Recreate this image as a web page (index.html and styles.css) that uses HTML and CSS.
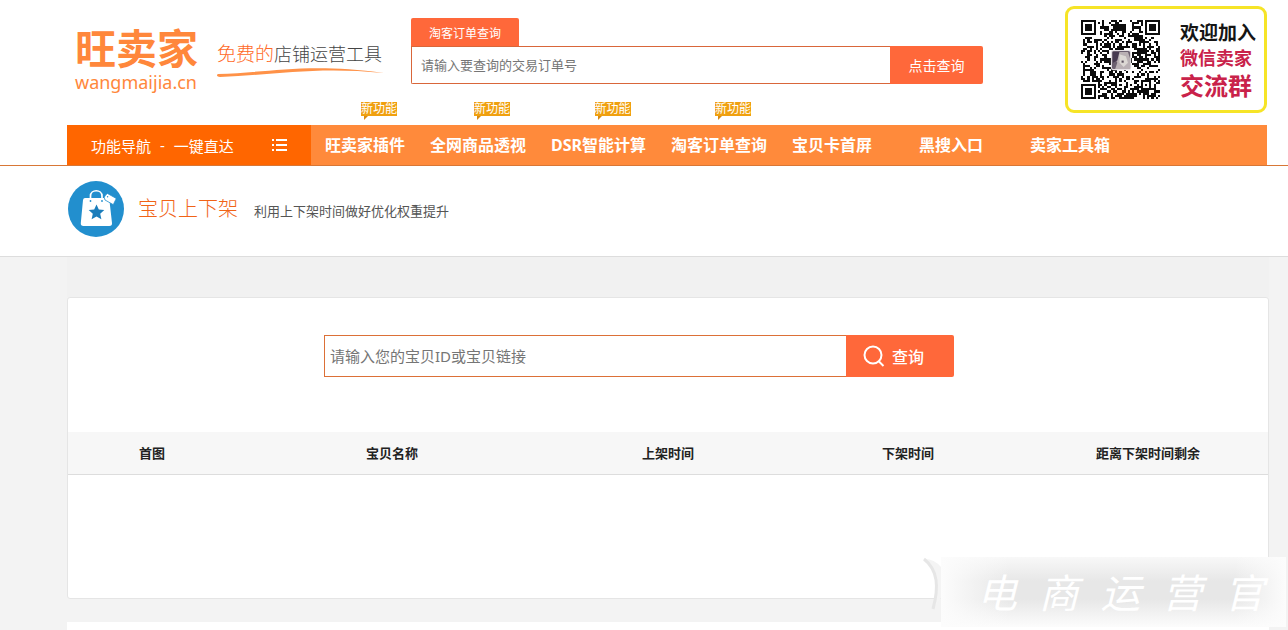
FILE: index.html
```html
<!DOCTYPE html>
<html lang="zh-CN">
<head>
<meta charset="utf-8">
<title>旺卖家 - 宝贝上下架</title>
<link rel="stylesheet" href="styles.css">
</head>
<body>
<header class="header wrap">
  <a class="logo" href="#">
    <span class="logo-name">旺卖家</span>
    <span class="logo-domain">wangmaijia.cn</span>
  </a>
  <div class="slogan">
    <p class="slogan-text"><em>免费的</em>店铺运营工具</p>
    <svg class="slogan-line" viewBox="0 0 168 12" aria-hidden="true"><path d="M1 8C50 7 90-4 167 7C100 0 55 9 3 11C0 11-1 9 1 8Z" fill="#ff9248"/></svg>
  </div>
  <form class="order-search">
    <label class="order-tab" for="order">淘客订单查询</label>
    <div class="order-row">
      <input id="order" class="order-input" type="text" placeholder="请输入要查询的交易订单号">
      <button class="order-button" type="button">点击查询</button>
    </div>
  </form>
  <aside class="group">
    <svg class="qr" id="qr" viewBox="0 0 37 37" role="img" aria-label="微信群二维码" shape-rendering="crispEdges">
      <path id="qr-modules" fill="#0c0c0c"/>
      <g shape-rendering="auto">
        <rect x="14" y="14" width="9.5" height="9.5" rx="1" fill="#e6e2e6"/>
        <rect x="14.5" y="14.5" width="8.5" height="8.5" rx=".8" fill="#6c6070"/>
        <path d="M17 15h5l1 3v5h-7l1-3-1-2z" fill="#b9b0b4"/>
        <path d="M18 16l3 1 1 3-2 2-2-2z" fill="#dcd8d4"/>
        <path d="M15 15h3l-1 4-2 1z" fill="#473a51"/>
        <path d="M19 19h1v1h-1z" fill="#5e5360"/>
      </g>
    </svg>
    <div class="group-text">
      <span class="group-join">欢迎加入</span>
      <span class="group-wechat">微信卖家</span>
      <span class="group-name">交流群</span>
    </div>
  </aside>
</header>

<nav class="nav">
  <div class="wrap">
    <div class="nav-bar">
      <button class="nav-menu" type="button">
        <span class="nav-menu-text"><span>功能导航</span><span>-</span><span>一键直达</span></span>
        <svg width="15" height="12" viewBox="0 0 15 12" aria-hidden="true"><path d="M0 0h2v2H0zM4 0h11v2H4zM0 5h2v2H0zM4 5h11v2H4zM0 10h2v2H0zM4 10h11v2H4z" fill="#fff"/></svg>
      </button>
      <ul class="nav-list">
        <li><a href="#">旺卖家插件<span class="badge">新功能</span></a></li>
        <li><a href="#">全网商品透视<span class="badge">新功能</span></a></li>
        <li><a href="#">DSR智能计算<span class="badge">新功能</span></a></li>
        <li><a href="#">淘客订单查询<span class="badge">新功能</span></a></li>
        <li><a href="#">宝贝卡首屏</a></li>
        <li><a class="nav-wide" href="#">黑搜入口</a></li>
        <li><a href="#">卖家工具箱</a></li>
      </ul>
    </div>
  </div>
</nav>

<section class="title">
  <div class="wrap title-row">
    <svg class="title-icon" viewBox="0 0 56 56" aria-hidden="true">
      <circle cx="28" cy="28" r="28" fill="#228fce"/>
      <path d="M17 17h22q2 0 2.400 2L44 42q.3 3-2.700 3H15.500q-3 0-2.700-3L15 19q.3-2 2-2z" fill="#fff"/>
      <path d="M22.500 19v-4c0-7 11.500-7 11.500 0v4" fill="none" stroke="#fff" stroke-width="1.700"/>
      <circle cx="22.500" cy="20" r=".9" fill="#228fce"/><circle cx="34" cy="20" r=".9" fill="#228fce"/>
      <path d="M37.500 14l2-1.500 8 4.500q.8.500.4 1.300l-2.200 4.500q-.4.800-1.200.4l-7.500-4.200-.8-2.600z" fill="#fff" stroke="#228fce" stroke-width=".8"/>
      <circle cx="39.600" cy="15.700" r=".7" fill="#228fce"/>
      <path d="M28.500 23.500l2.300 5 5.500.6-4.100 3.700 1.200 5.500-4.900-2.800-4.900 2.800 1.200-5.500-4.100-3.700 5.500-.6z" fill="#1b7dbb"/>
    </svg>
    <h1 class="title-name">宝贝上下架</h1>
    <p class="title-desc">利用上下架时间做好优化权重提升</p>
  </div>
</section>

<main class="main">
  <div class="content">
    <section class="card">
      <form class="item-search">
        <input class="item-input" type="text" aria-label="宝贝ID或宝贝链接" placeholder="请输入您的宝贝ID或宝贝链接">
        <button class="item-button" type="button">
          <svg width="22" height="22" viewBox="0 0 22 22" fill="none" stroke="#fff" stroke-width="2" aria-hidden="true"><circle cx="10" cy="10" r="8.500"/><path d="M15.500 16l5 5"/></svg>
          查询
        </button>
      </form>
      <table class="items">
        <thead>
          <tr><th class="col-image">首图</th><th class="col-name">宝贝名称</th><th>上架时间</th><th>下架时间</th><th>距离下架时间剩余</th></tr>
        </thead>
      </table>
    </section>
    <section class="next"></section>
  </div>
</main>

<div class="watermark">
  <svg class="watermark-curl" viewBox="0 0 18 54" aria-hidden="true"><path d="M2 2C13 12 18 29 11 50L18 41V10Q11 2 2 2Z" fill="#f4f4f4"/><path d="M1 2C15 13 16 30 10 52" fill="none" stroke="#e6e6e6" stroke-width="3"/></svg>
  <div class="watermark-text"><span>电</span><span>商</span><span>运</span><span>营</span><span>官</span></div>
</div>
<script src="qr.js"></script>
</body>
</html>
```
FILE: styles.css
```css
* {
  box-sizing: border-box;
}

body {
  margin: 0;
  position: relative;
  background: #f3f3f3;
  color: #333;
  font: 13px/20px "Noto Sans", "Noto Sans CJK SC", sans-serif;
}

h1, p, ul {
  margin: 0;
  padding: 0;
}

button, input {
  font-family: inherit;
  margin: 0;
}

a {
  color: inherit;
  text-decoration: none;
}

.wrap {
  padding: 0 21px 0 67px;
}

.header {
  display: flex;
  align-items: flex-start;
  height: 125px;
  background: #fff;
}

.logo {
  display: flex;
  flex-direction: column;
  width: 142px;
  padding: 26px 0 0 8px;
  color: #ff873b;
  white-space: nowrap;
}

.logo-name {
  font-size: 41px;
  font-weight: 700;
  line-height: 44px;
}

.logo-domain {
  font-size: 18px;
  line-height: 24px;
}

.slogan {
  width: 202px;
  padding: 40px 0 0 8px;
}

.slogan-text {
  font-family: "Noto Sans CJK SC", sans-serif;
  font-size: 18px;
  font-weight: 300;
  line-height: 26px;
  color: #444;
  white-space: nowrap;
}

.slogan-text em {
  font-size: 19px;
  font-style: normal;
  color: #ff6a28;
}

.slogan-line {
  display: block;
  width: 168px;
  height: 12px;
}

.order-search {
  width: 572px;
  padding-top: 18px;
}

.order-tab {
  display: block;
  width: 108px;
  height: 28px;
  padding-top: 2px;
  border-radius: 2px 2px 0 0;
  background: #ff683a;
  color: #fff;
  font-size: 12px;
  line-height: 28px;
  text-align: center;
}

.order-row {
  display: flex;
  height: 38px;
}

.order-input {
  flex: 1;
  min-width: 0;
  border: 1px solid #d9663a;
  border-right: 0;
  border-radius: 0 0 0 2px;
  padding: 0 9px;
  font-size: 13px;
  background: #fff;
}

.order-input::placeholder,
.item-input::placeholder {
  color: #757575;
}

.order-button {
  width: 93px;
  border: 0;
  border-radius: 0 2px 2px 0;
  background: #ff683a;
  color: #fff;
  font-size: 14px;
}

.group {
  display: flex;
  align-items: center;
  gap: 20px;
  width: 202px;
  height: 107px;
  margin: 6px 0 0 auto;
  padding-left: 13px;
  border: 3px solid #f6e427;
  border-radius: 9px;
  white-space: nowrap;
}

.qr {
  width: 79px;
  height: 79px;
}

.group-text {
  display: flex;
  flex-direction: column;
  padding-top: 2px;
  font-weight: 700;
  color: #c9224a;
}

.group-join {
  font-size: 19px;
  line-height: 26px;
  color: #151515;
}

.group-wechat {
  font-size: 18px;
  line-height: 25px;
}

.group-name {
  font-size: 24px;
  line-height: 30px;
}

.nav {
  background: #fff;
  border-bottom: 1px solid #d87736;
}

.nav-bar {
  display: flex;
  height: 40px;
  background: #ff8a3b;
}

.nav-menu {
  display: flex;
  align-items: center;
  justify-content: space-between;
  width: 244px;
  padding: 0 24px;
  border: 0;
  background: #ff6600;
  color: #fff;
  font-size: 15px;
}

.nav-menu-text {
  display: flex;
  gap: 9px;
}

.nav-list {
  display: flex;
  gap: 1px;
  padding-left: 2px;
  list-style: none;
}

.nav-list a {
  position: relative;
  display: block;
  padding: 0 12px;
  color: #fff;
  font-size: 16px;
  font-weight: 700;
  line-height: 40px;
  white-space: nowrap;
}

.nav-list .nav-wide {
  padding: 0 34px;
}

.badge {
  position: absolute;
  top: -23px;
  left: calc(50% - 4px);
  width: 36px;
  height: 14px;
  background: #f0a00f;
  color: #fff;
  font-size: 12px;
  font-weight: 400;
  line-height: 14px;
  text-align: center;
}

.badge::after {
  content: "";
  position: absolute;
  top: 14px;
  left: 3px;
  border-top: 4px solid #d88b14;
  border-right: 4px solid transparent;
}

.title {
  background: #fff;
  border-bottom: 1px solid #ddd;
}

.title-row {
  display: flex;
  align-items: center;
  height: 90px;
  padding-bottom: 4px;
}

.title-icon {
  width: 56px;
  height: 56px;
  margin: 0 14px 0 1px;
}

.title-name {
  font-size: 20px;
  font-weight: 300;
  line-height: 28px;
  color: #f16316;
}

.title-desc {
  margin-left: 16px;
  padding-top: 3px;
  color: #555;
}

.main {
  padding: 0 19px 0 67px;
}

.content {
  padding-top: 40px;
  background: linear-gradient(#f1f1f1, #f1f1f1) 0 0 / 100% 40px no-repeat;
}

.card {
  min-height: 302px;
  padding-top: 37px;
  border: 1px solid #e5e5e5;
  border-radius: 3px;
  background: #fff;
}

.item-search {
  display: flex;
  width: 630px;
  height: 42px;
  margin: 0 0 55px 256px;
}

.item-input {
  flex: 1;
  min-width: 0;
  border: 1px solid #dc7037;
  border-right: 0;
  padding: 0 5px;
  font-size: 15px;
}

.item-button {
  display: flex;
  align-items: center;
  gap: 7px;
  width: 108px;
  padding: 0 0 0 17px;
  border: 0;
  border-radius: 0 2px 2px 0;
  background: #ff683a;
  color: #fff;
  font-size: 16px;
  font-weight: 500;
}

.items {
  width: 100%;
  table-layout: fixed;
  border-collapse: collapse;
}

.items th {
  height: 42px;
  padding: 0;
  border-bottom: 1px solid #ddd;
  background: #f7f7f7;
  color: #222;
  font-size: 13px;
}

.items .col-image {
  width: 14%;
}

.items .col-name {
  width: 26%;
}

.next {
  height: 8px;
  margin-top: 23px;
  background: #fff;
}

.watermark {
  position: absolute;
  right: 2px;
  bottom: 3px;
  width: 345px;
  height: 70px;
  background:
    linear-gradient(to right, #fcfcfc, transparent 20%, transparent 85%, #fcfcfc),
    linear-gradient(#f8f8f8, #e7e7e7 35%, #e7e7e7 60%, #fcfcfc);
}

.watermark-curl {
  position: absolute;
  top: 0;
  left: -18px;
  width: 18px;
  height: 54px;
}

.watermark-text {
  display: flex;
  justify-content: space-between;
  padding: 0 22px 0 36px;
  color: #fff;
  font-family: "Noto Sans CJK SC", sans-serif;
  font-size: 40px;
  font-style: italic;
  line-height: 68px;
}
```
FILE: qr.js
```js
// Fills the 37x37 module grid around the three finder squares.
const size = 37;
let seed = 20177;

function next() {
  seed = (seed * 1103515245 + 12345) % 2147483648;
  return seed / 2147483648;
}

function finder(x, y, left, top) {
  const dx = Math.abs(x - left - 3);
  const dy = Math.abs(y - top - 3);
  const ring = Math.max(dx, dy);
  if (ring > 4) return null;
  return ring === 3 || ring < 2;
}

let path = "";
for (let y = 0; y < size; y++) {
  for (let x = 0; x < size; x++) {
    let dark = next() > 0.5;
    for (const [left, top] of [[0, 0], [30, 0], [0, 30]]) {
      const module = finder(x, y, left, top);
      if (module !== null) dark = module;
    }
    const ring = Math.max(Math.abs(x - 30), Math.abs(y - 30));
    if (ring < 3) dark = ring !== 1;
    if (dark) path += `M${x} ${y}h1v1h-1z`;
  }
}
document.getElementById("qr-modules").setAttribute("d", path);
```
